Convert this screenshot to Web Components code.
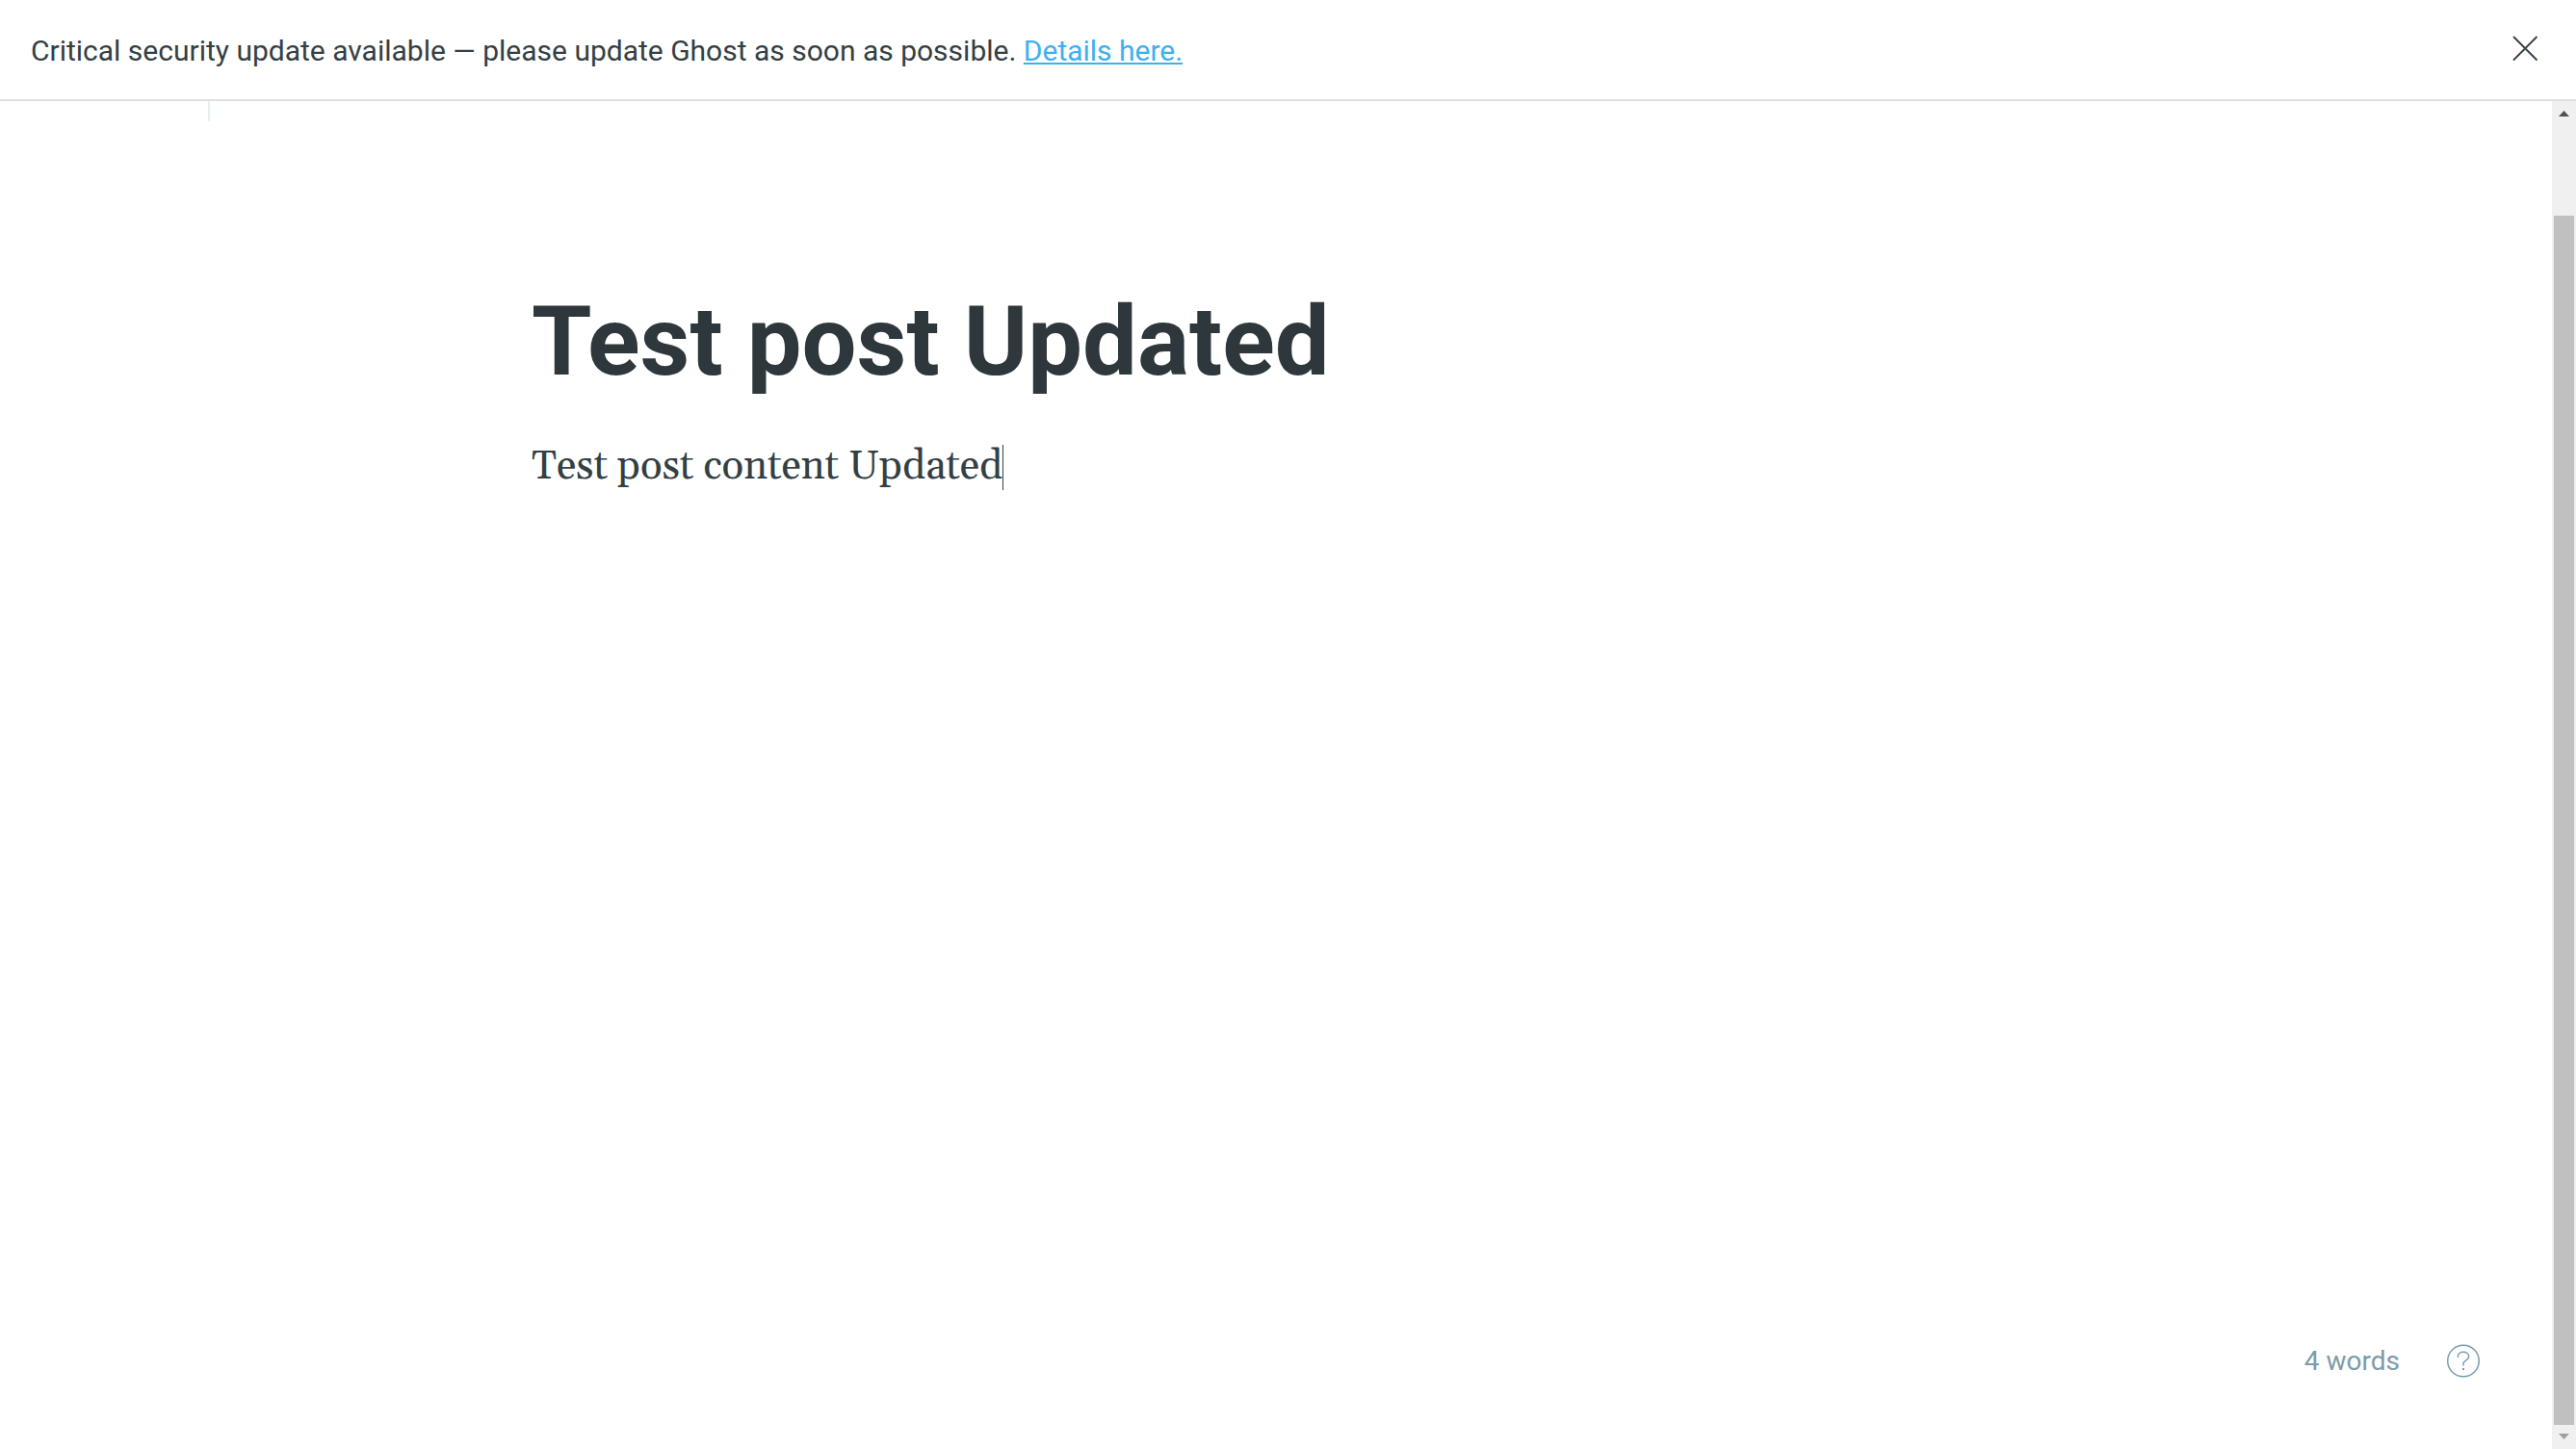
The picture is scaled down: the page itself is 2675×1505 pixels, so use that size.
<!DOCTYPE html>
<html lang="en">
<head>
<meta charset="utf-8">
<meta name="viewport" content="width=device-width, initial-scale=1">
<title>Test post Updated</title>
<style>
html, body { height: 100%; margin: 0; }
body { background: #fff; color: #343f44; font-family: Roboto, "Liberation Sans", sans-serif; }
</style>
</head>
<body>
<ghost-app></ghost-app>
<script>
const define = (name, html, init) => {
  const template = document.createElement('template');
  template.innerHTML = html;
  customElements.define(name, class extends HTMLElement {
    constructor() {
      super();
      this.attachShadow({ mode: 'open' }).append(template.content.cloneNode(true));
      if (init) init.call(this, this.shadowRoot);
    }
  });
};

define('ghost-alert', `
<style>
:host { display: flex; align-items: flex-start; justify-content: space-between; box-sizing: border-box; height: 105px; padding: 32px 32px 0; border-bottom: 2px solid #e0e0e0; background: #fff; font-size: 30px; line-height: 42px; }
button { display: flex; padding: 5px 6px; border: 0; background: none; color: #343f44; cursor: pointer; }
svg { display: block; width: 28px; height: 28px; }
</style>
<div role="alert"><slot></slot></div>
<button type="button" aria-label="Close"><svg viewBox="0 0 28 28" fill="none" stroke="currentColor" stroke-width="1.8" stroke-linecap="round"><path d="M1.5 1.5 25 25M25 1.5 1.5 25"/></svg></button>
`, function (root) {
  root.querySelector('button').addEventListener('click', () => this.remove());
});

define('alert-link', `
<style>
:host { display: inline; }
a { color: #3eb0ef; text-decoration: underline; text-decoration-thickness: 2px; text-underline-offset: 2px; text-decoration-skip-ink: none; }
</style>
<a href="#details"><slot></slot></a>
`);

define('editor-header', `
<style>
:host { display: flex; height: 21px; }
span { width: 216px; border-right: 2px solid #e5eff5; }
</style>
<span></span>
`);

define('post-editor', `
<style>
:host { display: flex; flex-direction: column; flex: 1; box-sizing: border-box; width: 100%; max-width: 1546px; margin: 0 auto; padding-top: 169px; }
textarea { display: block; width: 100%; height: 120px; margin: 0; padding: 0; border: 0; outline: 0; resize: none; overflow: hidden; background: none; color: #2e373b; font: 700 101px/120px Roboto, "Liberation Sans", sans-serif; }
.body { display: flex; align-items: center; margin-top: 38px; font: 42px/64px Gelasio, Georgia, "Liberation Serif", serif; }
p { margin: 0; outline: 0; }
.caret { width: 1px; height: 47px; background: #343f44; }
</style>
<textarea rows="1" aria-label="Post title" spellcheck="false">Test post Updated</textarea>
<div class="body"><p contenteditable="true" role="textbox" aria-label="Post content" spellcheck="false">Test post content Updated</p><span class="caret"></span></div>
`);

define('editor-status', `
<style>
:host { display: flex; align-items: center; justify-content: flex-end; gap: 48px; padding: 0 74px 71px 0; color: #7c9caa; font-size: 28px; line-height: 40px; }
a { display: flex; color: inherit; }
svg { display: block; width: 36px; height: 36px; }
</style>
<span><slot></slot></span>
<a href="#help" aria-label="Markdown help"><svg viewBox="0 0 36 36" fill="none" stroke="currentColor" stroke-width="1.5"><circle cx="18" cy="17.5" r="16.3"/><path d="M12.4 13.6V13c0-2.8 2.4-4.7 5.6-4.7s5.7 1.9 5.7 4.8c0 4-5.7 3.4-5.7 7.2v1.8" stroke-linecap="round"/><path d="M18 25v2.1" stroke-width="2"/></svg></a>
`);

define('scroll-track', `
<style>
:host { display: flex; flex-direction: column; flex: none; width: 25px; background: #f0f0f0; }
svg { display: block; width: 25px; flex: none; }
.gap { flex: 94 0 0; }
.thumb { flex: 1256 0 0; margin: 0 2px; background: #c0c0c0; }
</style>
<svg height="25" viewBox="0 0 25 25"><path d="M7 16 12.5 10 18 16Z" fill="#505050"/></svg>
<div class="gap"></div>
<div class="thumb"></div>
<svg height="25" viewBox="0 0 25 25"><path d="M7 9 12.5 15 18 9Z" fill="#a0a0a0"/></svg>
`);

define('ghost-app', `
<style>
:host { display: flex; flex-direction: column; min-height: 100vh; }
.view { display: flex; flex: 1; }
main { display: flex; flex-direction: column; flex: 1; min-width: 0; }
</style>
<ghost-alert>Critical security update available — please update Ghost as soon as possible. <alert-link>Details here.</alert-link></ghost-alert>
<div class="view">
<main>
<editor-header></editor-header>
<post-editor></post-editor>
<editor-status>4 words</editor-status>
</main>
<scroll-track aria-hidden="true"></scroll-track>
</div>
`);
</script>
</body>
</html>
